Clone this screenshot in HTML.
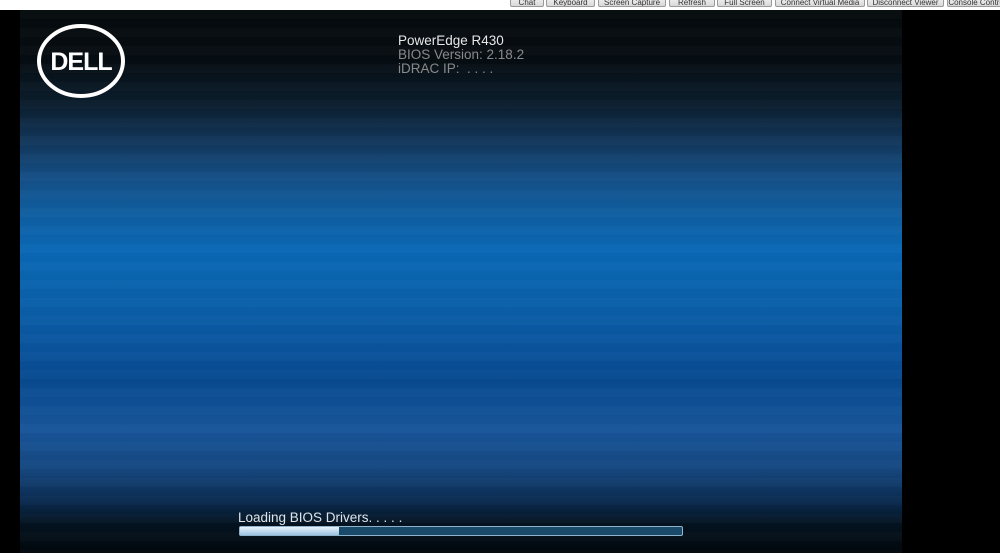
<!DOCTYPE html>
<html><head><style>
body{margin:0;width:1000px;height:553px;background:#000;position:relative;overflow:hidden;font-family:"Liberation Sans",sans-serif}
#top{position:absolute;left:0;top:0;width:1000px;height:10px;background:#fff}
.b{position:absolute;top:-4px;height:11px;border:1px solid #9a9a9a;border-radius:2px;background:linear-gradient(#f4f4f4,#d8d8d8);font-size:8px;line-height:11px;color:#333;text-align:center;white-space:nowrap;overflow:hidden;box-sizing:border-box}
#scr{position:absolute;left:20px;top:10px;width:882px;height:543px;
background:linear-gradient(#050a0c 0px,#060d12 50px,#0b1e2e 95px,#12365a 130px,#145088 170px,#0f5fa2 205px,#0a68b5 240px,#0a62ac 285px,#0a56a0 330px,#084a90 370px,#18559a 420px,#15477f 460px,#0a2a4e 492px,#04121f 515px,#02080c 543px)}
#bands{position:absolute;inset:0;background:repeating-linear-gradient(rgba(255,255,255,0.015) 0 9px,rgba(0,0,0,0.015) 9px 18px)}
.t{position:absolute;font-size:13.5px;white-space:nowrap}
</style></head><body>
<div id="top"></div>
<div class="b" style="left:510px;width:34px">Chat</div>
<div class="b" style="left:546px;width:49px">Keyboard</div>
<div class="b" style="left:598px;width:68px">Screen Capture</div>
<div class="b" style="left:669px;width:46px">Refresh</div>
<div class="b" style="left:717px;width:55px">Full Screen</div>
<div class="b" style="left:775px;width:90px">Connect Virtual Media</div>
<div class="b" style="left:867px;width:77px">Disconnect Viewer</div>
<div class="b" style="left:947px;width:60px">Console Control</div>
<div id="scr"><div id="bands"></div>
<svg style="position:absolute;left:16px;top:14px" width="90" height="74" viewBox="0 0 90 74">
<ellipse cx="45" cy="37" rx="42" ry="35" fill="none" stroke="#fff" stroke-width="4"/>
<text x="45" y="46" text-anchor="middle" fill="#fff" font-family="Liberation Sans" font-weight="bold" font-size="25" letter-spacing="-1">DELL</text>
</svg>
<div class="t" style="left:378px;top:23px;color:#e8e8e8">PowerEdge R430</div>
<div class="t" style="left:378px;top:37px;color:#8a8a8a">BIOS Version: 2.18.2</div>
<div class="t" style="left:378px;top:51px;color:#8a8a8a">iDRAC IP: &nbsp;. . . .</div>
<div class="t" style="left:218px;top:500px;color:#dde4ea">Loading BIOS Drivers. . . . .</div>
<div style="position:absolute;left:219px;top:516px;width:442px;height:8px;border:1px solid #8fb3cc;border-radius:2px;background:#1a4a6a">
<div style="width:99px;height:8px;background:linear-gradient(#e8f2fa,#9cc4e2)"></div></div>
</div>
</body></html>
